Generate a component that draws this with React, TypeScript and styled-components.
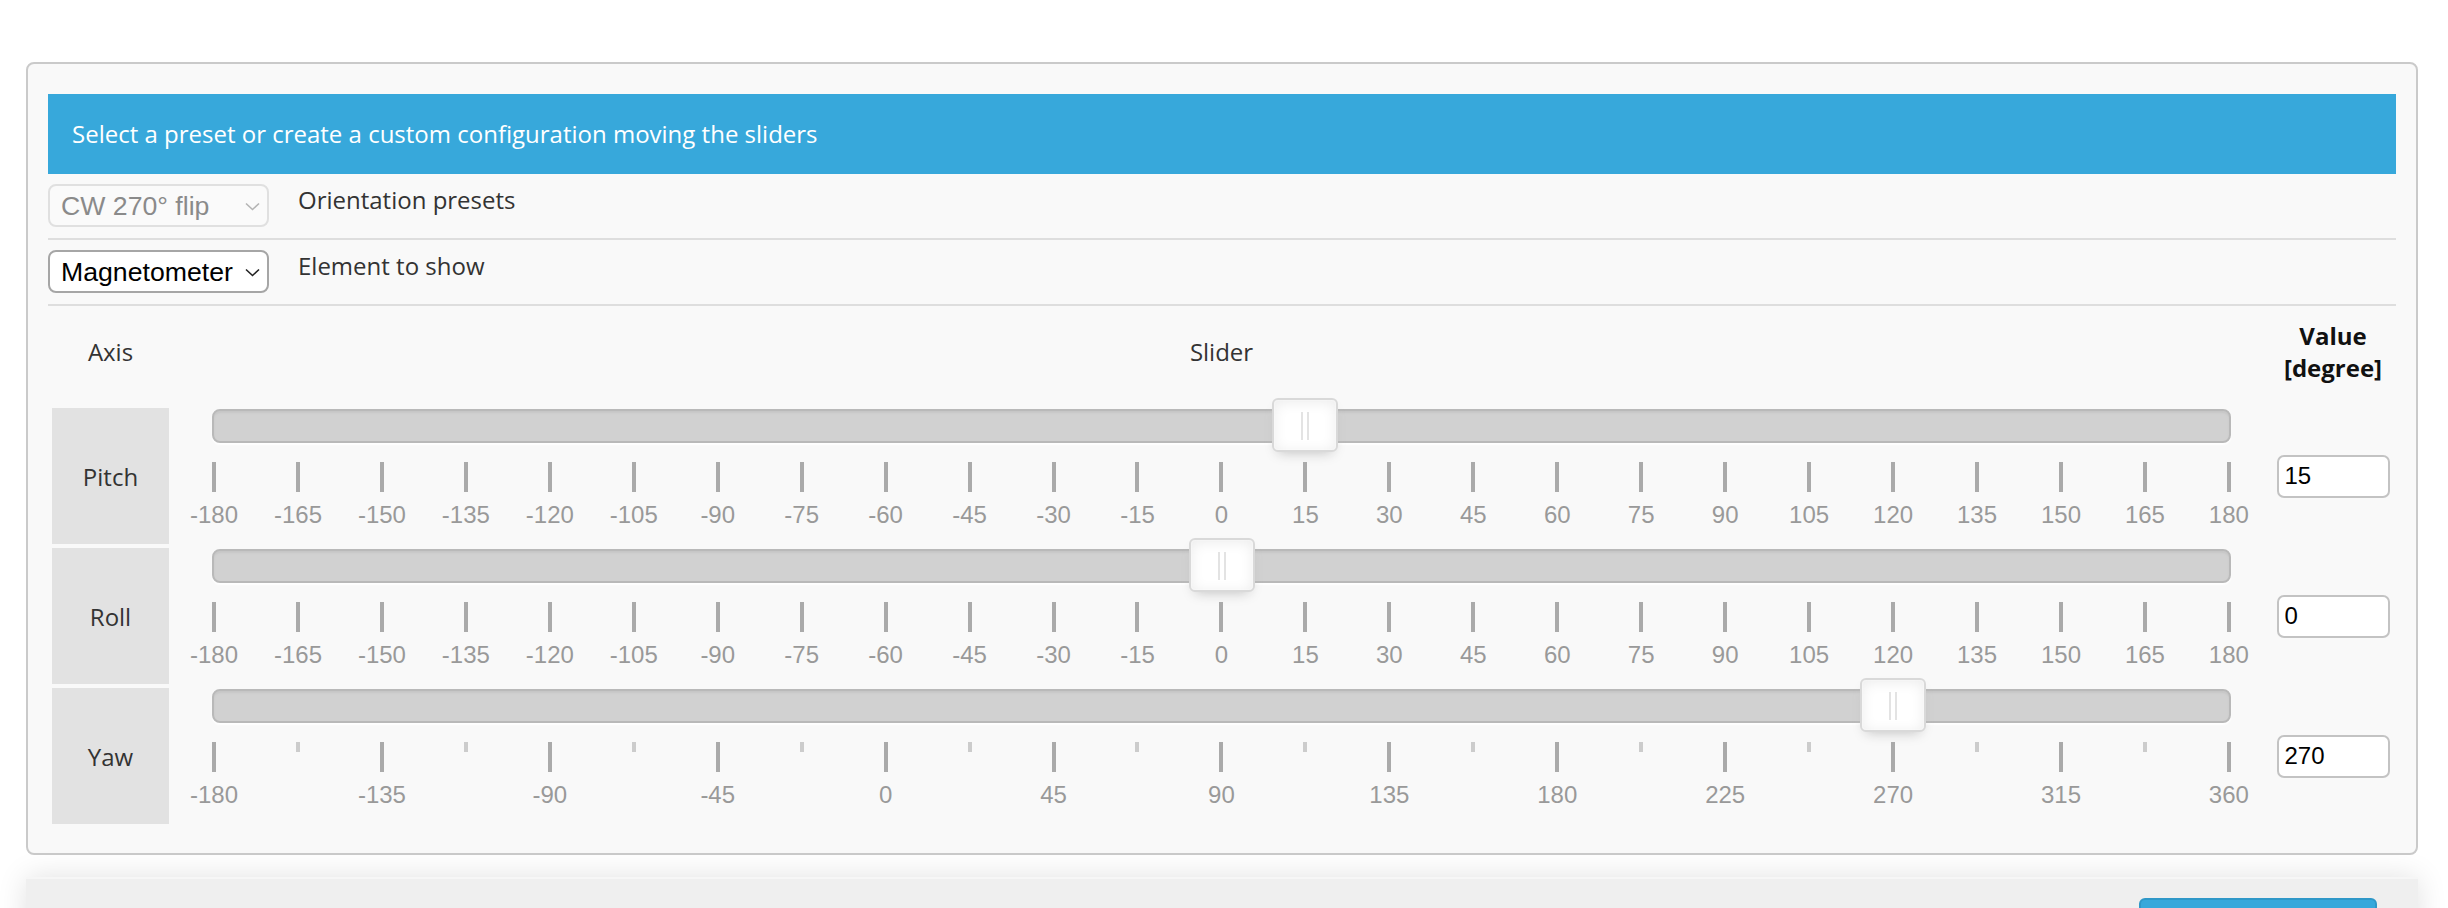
import React from 'react';
import styled, { createGlobalStyle } from 'styled-components';

const GlobalStyle = createGlobalStyle`
  *, *::before, *::after { box-sizing: border-box; }
  html, body { margin: 0; padding: 0; background: #fff; }
  body {
    font-family: 'Open Sans', 'Liberation Sans', sans-serif;
    color: #333;
  }
`;

interface IPip {
  value: number;
  large: boolean;
}

interface IAxis {
  name: string;
  min: number;
  max: number;
  value: number;
  pips: IPip[];
}

const evenPips = Array.from({ length: 25 }, (_, i) => ({ value: -180 + i * 15, large: true }));
const yawPips = Array.from({ length: 25 }, (_, i) => ({ value: -180 + i * 22.5, large: i % 2 === 0 }));

const axes: IAxis[] = [
  { name: 'Pitch', min: -180, max: 180, value: 15, pips: evenPips },
  { name: 'Roll', min: -180, max: 180, value: 0, pips: evenPips },
  { name: 'Yaw', min: -180, max: 360, value: 270, pips: yawPips },
];

function Chevron({ color }: { color: string }) {
  return (
    <S.Chevron width='15' height='9' viewBox='0 0 15 9'>
      <polyline points='1,1.5 7.5,7.5 14,1.5' fill='none' stroke={color} strokeWidth='1.6' />
    </S.Chevron>
  );
}

function Slider({ axis }: { axis: IAxis }) {
  const pct = ((axis.value - axis.min) / (axis.max - axis.min)) * 100;
  return (
    <S.SliderCell>
      <S.Track>
        <S.Handle style={{ left: `${pct}%` }} />
      </S.Track>
      <S.PipScale>
        {axis.pips.map((pip) => (
          <S.Pip key={pip.value}>
            <S.Marker $large={pip.large} />
            {pip.large && <S.PipValue>{pip.value}</S.PipValue>}
          </S.Pip>
        ))}
      </S.PipScale>
    </S.SliderCell>
  );
}

export default function App() {
  return (
    <>
      <GlobalStyle />
      <S.Page>
        <S.Panel>
          <S.TitleBar>Select a preset or create a custom configuration moving the sliders</S.TitleBar>
          <S.OptionRow>
            <S.SelectWrap>
              <S.Select disabled $disabled defaultValue='cw270flip'>
                <option value='cw270flip'>CW 270° flip</option>
              </S.Select>
              <Chevron color='#b4b4b4' />
            </S.SelectWrap>
            <S.OptionLabel>Orientation presets</S.OptionLabel>
          </S.OptionRow>
          <S.OptionRow>
            <S.SelectWrap>
              <S.Select defaultValue='mag'>
                <option value='mag'>Magnetometer</option>
              </S.Select>
              <Chevron color='#222' />
            </S.SelectWrap>
            <S.OptionLabel>Element to show</S.OptionLabel>
          </S.OptionRow>
          <S.AxisGrid>
            <S.HeadCell>Axis</S.HeadCell>
            <S.HeadCell>Slider</S.HeadCell>
            <S.HeadCell $bold>
              Value
              <br />
              [degree]
            </S.HeadCell>
            {axes.map((axis) => (
              <React.Fragment key={axis.name}>
                <S.AxisName>{axis.name}</S.AxisName>
                <Slider axis={axis} />
                <S.ValueCell>
                  <S.ValueInput type='number' defaultValue={axis.value} />
                </S.ValueCell>
              </React.Fragment>
            ))}
          </S.AxisGrid>
        </S.Panel>
        <S.Footer>
          <S.SaveButton aria-label='Save' />
        </S.Footer>
      </S.Page>
    </>
  );
}

const S = {
  Page: styled.div`
    width: 2418px;
    padding: 62px 0 0 26px;
  `,
  Panel: styled.div`
    border: 2px solid #cacaca;
    border-radius: 8px;
    background: #f9f9f9;
    padding: 30px 20px 25px;
    margin-bottom: 22px;
  `,
  TitleBar: styled.div`
    height: 80px;
    display: flex;
    align-items: center;
    padding-left: 24px;
    background: #37a8db;
    color: #fff;
    font-size: 24px;
    line-height: 32px;
  `,
  OptionRow: styled.div`
    display: flex;
    align-items: flex-start;
    padding: 10px 0 11px;
    border-bottom: 2px solid #dedede;
  `,
  SelectWrap: styled.div`
    position: relative;
    width: 221px;
    height: 43px;
  `,
  Select: styled.select<{ $disabled?: boolean }>`
    appearance: none;
    width: 100%;
    height: 100%;
    margin: 0;
    padding: 0 0 0 11px;
    border: 2px solid ${(p) => (p.$disabled ? '#e0e0e0' : '#a6a6a6')};
    border-radius: 8px;
    background: ${(p) => (p.$disabled ? '#fafafa' : '#fff')};
    color: ${(p) => (p.$disabled ? '#8a8a8a' : '#000')};
    font-family: 'Liberation Sans', Arial, sans-serif;
    font-size: 26.67px;
    opacity: 1;
  `,
  Chevron: styled.svg`
    position: absolute;
    right: 9px;
    top: 18px;
    pointer-events: none;
  `,
  OptionLabel: styled.div`
    margin: 0 0 0 29px;
    font-size: 24px;
    line-height: 32px;
    color: #333;
  `,
  AxisGrid: styled.div`
    display: grid;
    grid-template-columns: 117px 1fr 118px;
    grid-template-rows: 94px repeat(3, 136px);
    gap: 4px;
    padding: 4px;
  `,
  HeadCell: styled.div<{ $bold?: boolean }>`
    display: flex;
    align-items: center;
    justify-content: center;
    padding-bottom: 10px;
    text-align: center;
    font-size: 24px;
    line-height: 32px;
    font-weight: ${(p) => (p.$bold ? 700 : 400)};
    color: ${(p) => (p.$bold ? '#111' : '#333')};
  `,
  AxisName: styled.div`
    display: flex;
    align-items: center;
    justify-content: center;
    background: #e2e2e2;
    font-size: 24px;
    color: #333;
  `,
  SliderCell: styled.div`
    padding: 1px 39px 0;
  `,
  Track: styled.div`
    position: relative;
    height: 34px;
    border: 2px solid #b9b9b9;
    border-radius: 8px;
    background: #d1d1d1;
    box-shadow: 0 2px 2px #fff, inset 0 2px 2px #c6c6c6;
  `,
  Handle: styled.div`
    position: absolute;
    top: -13px;
    width: 66px;
    height: 54px;
    margin-left: -33px;
    border: 2px solid #d9d9d9;
    border-radius: 6px;
    background: #fff;
    box-shadow: inset 0 0 2px #fff, inset 0 2px 14px #ebebeb, 0 6px 12px -6px #bbb;
    &::before,
    &::after {
      content: '';
      position: absolute;
      top: 12px;
      width: 2px;
      height: 28px;
      background: #e3e3e3;
    }
    &::before {
      left: 27px;
    }
    &::after {
      left: 33px;
    }
  `,
  PipScale: styled.div`
    display: flex;
    justify-content: space-between;
    margin: 19px 2px 0;
  `,
  Pip: styled.div`
    flex: none;
    width: 0;
    display: flex;
    flex-direction: column;
    align-items: center;
  `,
  Marker: styled.div<{ $large: boolean }>`
    flex: none;
    width: 4px;
    height: ${(p) => (p.$large ? '30px' : '10px')};
    background: ${(p) => (p.$large ? '#aaa' : '#ccc')};
  `,
  PipValue: styled.div`
    margin-top: 7px;
    white-space: nowrap;
    font-family: 'Liberation Sans', Arial, sans-serif;
    font-size: 24px;
    line-height: 32px;
    color: #999;
  `,
  ValueCell: styled.div`
    display: flex;
    align-items: center;
    justify-content: center;
  `,
  ValueInput: styled.input`
    width: 113px;
    height: 43px;
    margin: 0;
    padding: 0 0 0 6px;
    border: 2px solid #c3c3c3;
    border-radius: 7px;
    background: #fff;
    color: #000;
    font-family: 'Liberation Sans', Arial, sans-serif;
    font-size: 24px;
    outline: none;
    appearance: textfield;
    &::-webkit-inner-spin-button,
    &::-webkit-outer-spin-button {
      appearance: none;
      margin: 0;
    }
  `,
  Footer: styled.div`
    display: flex;
    justify-content: flex-end;
    height: 110px;
    padding: 19px 41px 0 0;
    border-top: 2px solid #f6f6f6;
    background: #efefef;
    box-shadow: 0 0 28px rgba(0, 0, 0, 0.12);
  `,
  SaveButton: styled.button`
    width: 238px;
    height: 56px;
    border: 2px solid #2f98c8;
    border-radius: 6px;
    background: #37a8db;
    color: #fff;
  `,
};
